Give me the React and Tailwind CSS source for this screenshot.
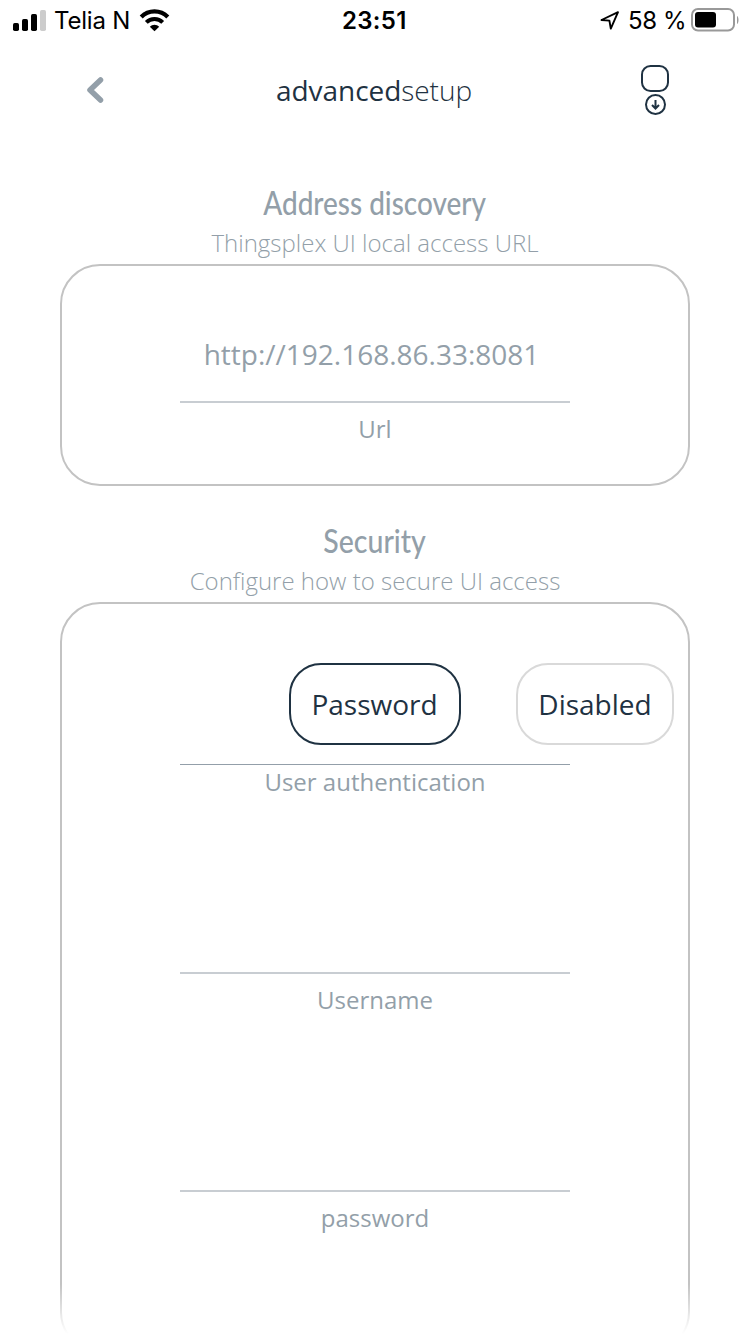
function StatusBar() {
  return (
    <div className="relative flex h-10 items-center justify-between text-black [font-family:Inter,sans-serif]">
      <div className="flex items-center pl-[13px]">
        <svg className="h-[21px] w-[33px]" viewBox="0 0 33 21">
          <rect x="0" y="13" width="6" height="8" rx="1.7" />
          <rect x="9" y="9" width="6" height="12" rx="1.7" />
          <rect x="18" y="4" width="6" height="17" rx="1.7" />
          <rect x="27" y="0" width="6" height="21" rx="1.7" fill="#cccccc" />
        </svg>
        <span className="ml-[8px] w-[77px] whitespace-nowrap pt-[2px] text-[24px] leading-10 tracking-[-0.2px]">Telia N</span>
        <svg className="ml-[8px] h-[23px] w-[31px]" viewBox="0 0 31 23">
          <path d="M2.2 8a18.6 18.6 0 0 1 26.6 0" fill="none" stroke="#000" strokeWidth="4.2" />
          <path d="M7.3 13.4a11.6 11.6 0 0 1 16.4 0" fill="none" stroke="#000" strokeWidth="4" />
          <path d="M10.8 17.7a6.8 6.8 0 0 1 9.4 0L15.5 22.3z" />
        </svg>
      </div>
      <span className="absolute left-[342px] whitespace-nowrap pt-[1px] text-[24px] font-semibold leading-10 tracking-[0.3px]">23:51</span>
      <div className="flex items-center pr-[11px]">
        <svg className="h-[20px] w-[20px]" viewBox="0 0 20 20">
          <path d="M1.5 10 18 2.2 10.8 18.6 9.4 10.6z" fill="none" stroke="#000" strokeWidth="1.9" strokeLinejoin="round" />
        </svg>
        <span className="ml-[8px] w-[58px] whitespace-nowrap pt-[2px] text-[24px] leading-10 tracking-[-0.4px]">58 %</span>
        <svg className="ml-[5px] h-[24px] w-[48px]" viewBox="0 0 48 24">
          <rect x="1" y="1" width="42" height="21.5" rx="6" fill="none" stroke="#999" strokeWidth="2" />
          <rect x="4" y="4" width="21" height="15.5" rx="3" />
          <path d="M46 8c2 1 2 7 0 8z" fill="#999" />
        </svg>
      </div>
    </div>
  );
}

function Header() {
  return (
    <header className="flex h-[100px] items-center justify-between px-[81px] text-[#1f3242]">
      <svg className="h-[28px] w-[28px]" viewBox="0 0 28 28">
        <path d="M19.5 4 9 14 19.5 24" fill="none" stroke="#939fa9" strokeWidth="5.5" strokeLinecap="round" strokeLinejoin="round" />
      </svg>
      <h1 className="mr-[2px] whitespace-nowrap text-[28px] leading-10 tracking-[-0.05px]">
        advanced<span className="font-light">setup</span>
      </h1>
      <svg className="h-[52px] w-[28px]" viewBox="0 0 28 52" fill="none" stroke="currentColor" strokeWidth="2">
        <rect x="1" y="2" width="26" height="25" rx="8.5" />
        <circle cx="14.5" cy="40.5" r="9.5" />
        <path d="M14.5 36v8M11 41l3.5 3.5L18 41" />
      </svg>
    </header>
  );
}

function Heading({ title, subtitle, titleClass }) {
  return (
    <div className="flex flex-col items-center whitespace-nowrap">
      <h2 className={"text-[32px] font-medium leading-10 [font-family:Lato,sans-serif] " + titleClass}>{title}</h2>
      <p className="text-[24px] font-light leading-10">{subtitle}</p>
    </div>
  );
}

function Field({ value, label }) {
  return (
    <div className="flex h-[115px] w-[390px] flex-col items-center">
      <div className="h-[69px] w-full shrink-0 border-b-2 border-[#c8cdd2] pr-[7px] text-center text-[28px] leading-10">{value}</div>
      <span className="mt-[6px] text-[24px] leading-10">{label}</span>
    </div>
  );
}

export default function App() {
  return (
    <div className="flex h-[1334px] flex-col overflow-hidden bg-white text-[#939fa9] [font-family:'Open_Sans',sans-serif]">
      <StatusBar />
      <Header />
      <main className="relative h-[1194px] px-[60px] pt-[43px]">
        <Heading title="Address discovery" subtitle="Thingsplex UI local access URL" titleClass="scale-x-[0.873]" />
        <section className="mt-[1px] flex h-[222px] flex-col items-center rounded-[40px] border-2 border-[#c3c3c3] pt-[68px]">
          <Field value="http://192.168.86.33:8081" label="Url" />
        </section>
        <div className="mt-[35px]">
          <Heading title="Security" subtitle="Configure how to secure UI access" titleClass="scale-x-[0.89]" />
        </div>
        <section className="mt-[1px] flex h-[750px] flex-col items-center rounded-[40px] border-2 border-[#c3c3c3] pt-[59px]">
          <div className="flex h-[82px] w-full pl-[227px] text-[28px] text-[#1f3242]">
            <button className="w-[172px] rounded-[32px] border-2 border-[#1f3242] pr-[1px]">Password</button>
            <button className="ml-[55px] w-[158px] rounded-[32px] border-2 border-[#d9d9d9]">Disabled</button>
          </div>
          <div className="mt-[19px] h-px w-[390px] bg-[#939fa9]" />
          <span className="mt-[-3px] text-[24px] leading-10">User authentication</span>
          <div className="mt-[103px]">
            <Field value="" label="Username" />
          </div>
          <div className="mt-[103px]">
            <Field value="" label="password" />
          </div>
        </section>
        <div className="absolute inset-x-0 bottom-0 h-[50px] bg-gradient-to-b from-white/0 to-white" />
      </main>
    </div>
  );
}
